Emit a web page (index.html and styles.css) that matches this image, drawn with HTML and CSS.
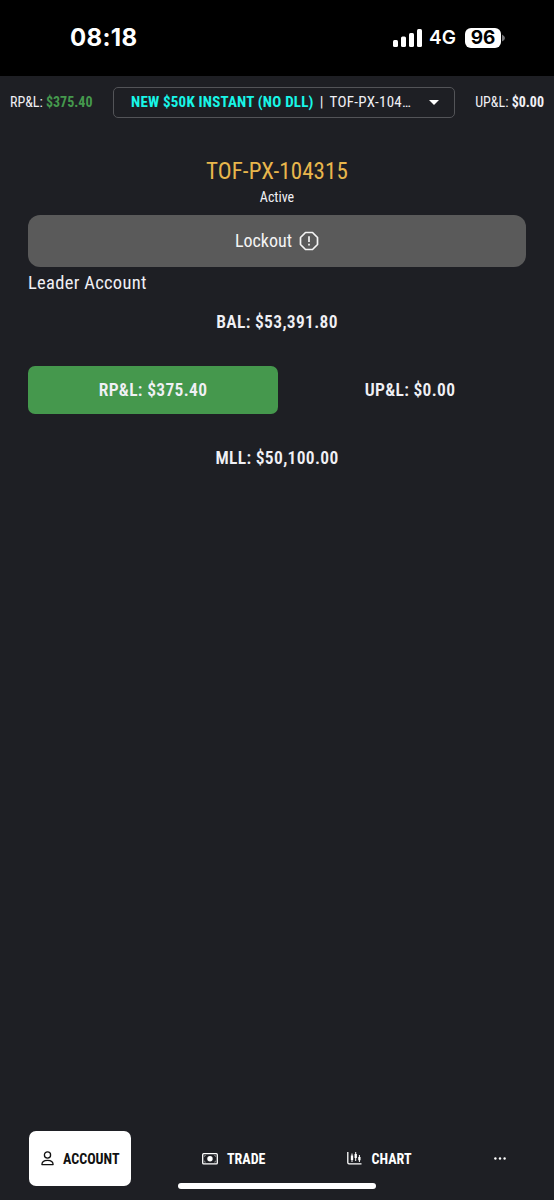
FILE: index.html
```html
<!DOCTYPE html>
<html lang="en">
<head>
<meta charset="utf-8">
<title>Account</title>
<link rel="stylesheet" href="styles.css">
</head>
<body>
<div class="status">
  <span class="clock">08:18</span>
  <div class="indicators">
    <svg class="signal" width="29" height="18" viewBox="0 0 29 18" fill="#fff"><rect x="0" y="11" width="5" height="7" rx="1.5"/><rect x="8" y="7.5" width="5" height="10.5" rx="1.5"/><rect x="16" y="4" width="5" height="14" rx="1.5"/><rect x="24" y="0" width="5" height="18" rx="1.5"/></svg>
    <span class="network">4G</span>
    <span class="battery">96</span>
    <svg class="cap" width="3" height="8" viewBox="0 0 3 8"><path d="M0 0.5Q3 2 3 4T0 7.5Z" fill="#77777a"/></svg>
  </div>
</div>
<header class="topbar">
  <div class="pnl">RP&amp;L: <b class="gain">$375.40</b></div>
  <div class="picker">
    <b class="plan">NEW $50K INSTANT (NO DLL)</b><span class="divider">|</span><span class="acct">TOF-PX-104…</span>
    <svg class="caret" width="10" height="5" viewBox="0 0 10 5"><path d="M0 0H10L5 5Z" fill="#fff"/></svg>
  </div>
  <div class="pnl upnl">UP&amp;L: <b>$0.00</b></div>
</header>
<main class="content">
  <h1 class="title">TOF-PX-104315</h1>
  <div class="state">Active</div>
  <button class="lockout"><span>Lockout</span>
    <svg width="20" height="20" viewBox="0 0 20 20" fill="none" stroke="#f4f4f4" stroke-width="1.7"><path d="M6.5 1.5H13.5L18.5 6.5V13.5L13.5 18.5H6.5L1.5 13.5V6.5Z" stroke-linejoin="round"/><path d="M10 5.3V11M10 12.8V14.6"/></svg>
  </button>
  <div class="leader">Leader Account</div>
  <div class="stats">
    <div class="stat wide">BAL: $53,391.80</div>
    <div class="stat positive">RP&amp;L: $375.40</div>
    <div class="stat open">UP&amp;L: $0.00</div>
    <div class="stat wide">MLL: $50,100.00</div>
  </div>
</main>
<nav class="tabs">
  <a class="tab active">
    <svg width="13" height="15" viewBox="0 0 13 15" fill="none" stroke="#111" stroke-width="1.3"><circle cx="6.5" cy="4" r="3.1"/><path d="M0.9 13.6C0.9 10.8 2.8 9.4 6.5 9.4S12.1 10.8 12.1 13.6Z" stroke-linejoin="round"/></svg>
    <span>ACCOUNT</span>
  </a>
  <a class="tab trade">
    <svg width="16" height="12" viewBox="0 0 16 12"><rect x="0.7" y="0.7" width="14.6" height="10.2" rx="1" fill="none" stroke="#fff" stroke-width="1.3"/><circle cx="8" cy="5.8" r="2.7" fill="#fff"/><path d="M2.5 4V2.5H4M12 2.5H13.5V4M2.5 7.6V9.1H4M12 9.1H13.5V7.6" stroke="#aaa" stroke-width=".6" fill="none"/></svg>
    <span>TRADE</span>
  </a>
  <a class="tab chart">
    <svg width="15" height="13" viewBox="0 0 15 13" fill="none" stroke="#fff"><path d="M0.8 0V10.6Q0.8 11.8 2 11.8H14.5" stroke-width="1.3"/><path d="M5 1.5V10M8.7 0V9M12.4 3V10" stroke-width="1"/><path d="M5 3.5V8M8.7 2V6M12.4 5V8.3" stroke-width="2.3"/></svg>
    <span>CHART</span>
  </a>
  <a class="tab more"><svg width="12" height="3" viewBox="0 0 12 3" fill="#fff"><circle cx="1.4" cy="1.5" r="1.2"/><circle cx="6" cy="1.5" r="1.2"/><circle cx="10.6" cy="1.5" r="1.2"/></svg></a>
</nav>
<div class="home"></div>
</body>
</html>
```
FILE: styles.css
```css
* { box-sizing: border-box; }
body { margin: 0; height: 1200px; display: flex; flex-direction: column; background: #1e1f24; color: #f0f0f5; font-family: "Roboto Condensed", Roboto, sans-serif; font-stretch: 75%; white-space: nowrap; overflow: hidden; }
svg { display: block; flex: none; }
.status { height: 76px; background: #000; color: #fff; display: flex; justify-content: space-between; align-items: flex-start; padding: 24px 49px 0 70px; font-family: Inter, sans-serif; font-stretch: 100%; }
.clock { font-size: 24px; line-height: 28px; font-weight: 700; letter-spacing: 0.35px; }
.indicators { display: flex; align-items: center; height: 28px; }
.signal { margin-right: -1px; }
.network { margin-left: 8px; font-size: 19px; line-height: 26px; font-weight: 600; width: 28px; }
.battery { margin-left: 8px; width: 36px; height: 20px; border-radius: 6px; background: #fff; color: #000; font-size: 19px; line-height: 20px; font-weight: 700; text-align: center; }
.cap { margin-left: 1px; }
.topbar { height: 52px; padding: 0 10px; display: grid; grid-template-columns: 103px 342px 1fr; align-items: center; font-size: 14px; }
.upnl { text-align: right; }
.gain { color: #45984d; }
.picker { height: 31px; border: 1px solid #535458; border-radius: 5px; padding: 0 15px 0 17px; display: flex; align-items: center; font-size: 15px; letter-spacing: 0.2px; }
.plan { color: #18f6e8; }
.divider { margin: 0 6px; }
.acct { letter-spacing: 0.3px; }
.caret { margin-left: auto; }
.content { padding: 0 28px; display: flex; flex-direction: column; flex: 1; }
.title { margin: 28px 0 0; font-size: 23px; line-height: 31px; letter-spacing: 0.1px; font-weight: 400; color: #e8b64c; text-align: center; }
.state { font-size: 14px; line-height: 20px; text-align: center; }
.lockout { margin-top: 8px; height: 52px; border: 0; border-radius: 12px; background: #5a5a5a; color: #f4f4f4; font: inherit; font-size: 18px; display: flex; justify-content: center; align-items: center; gap: 7px; padding: 0 0 1px; }
.lockout svg { margin-top: 1px; }
.leader { font-size: 18.5px; line-height: 24px; margin-top: 4px; letter-spacing: 0.3px; }
.stats { display: grid; grid-template-columns: 250px 1fr; row-gap: 20px; margin-top: 3px; }
.stat { height: 48px; padding-bottom: 1px; border-radius: 7px; display: flex; align-items: center; justify-content: center; font-size: 17.5px; font-weight: 600; letter-spacing: 0.33px; }
.wide { grid-column: span 2; }
.positive { background: #45984d; }
.open { padding-left: 16px; }
.tabs { height: 55px; display: flex; align-items: center; padding: 0 29px; margin-bottom: 14px; font-size: 14px; font-weight: 700; color: #fff; }
.tab { display: flex; align-items: center; gap: 9px; }
.active { width: 102px; height: 55px; border-radius: 7px; background: #fff; color: #111; padding-left: 12px; }
.trade { margin-left: 71px; }
.chart { margin-left: 82px; }
.more { margin-left: 82px; }
.home { position: absolute; left: 178px; top: 1183px; width: 198px; height: 6px; border-radius: 3px; background: #fff; }
```
